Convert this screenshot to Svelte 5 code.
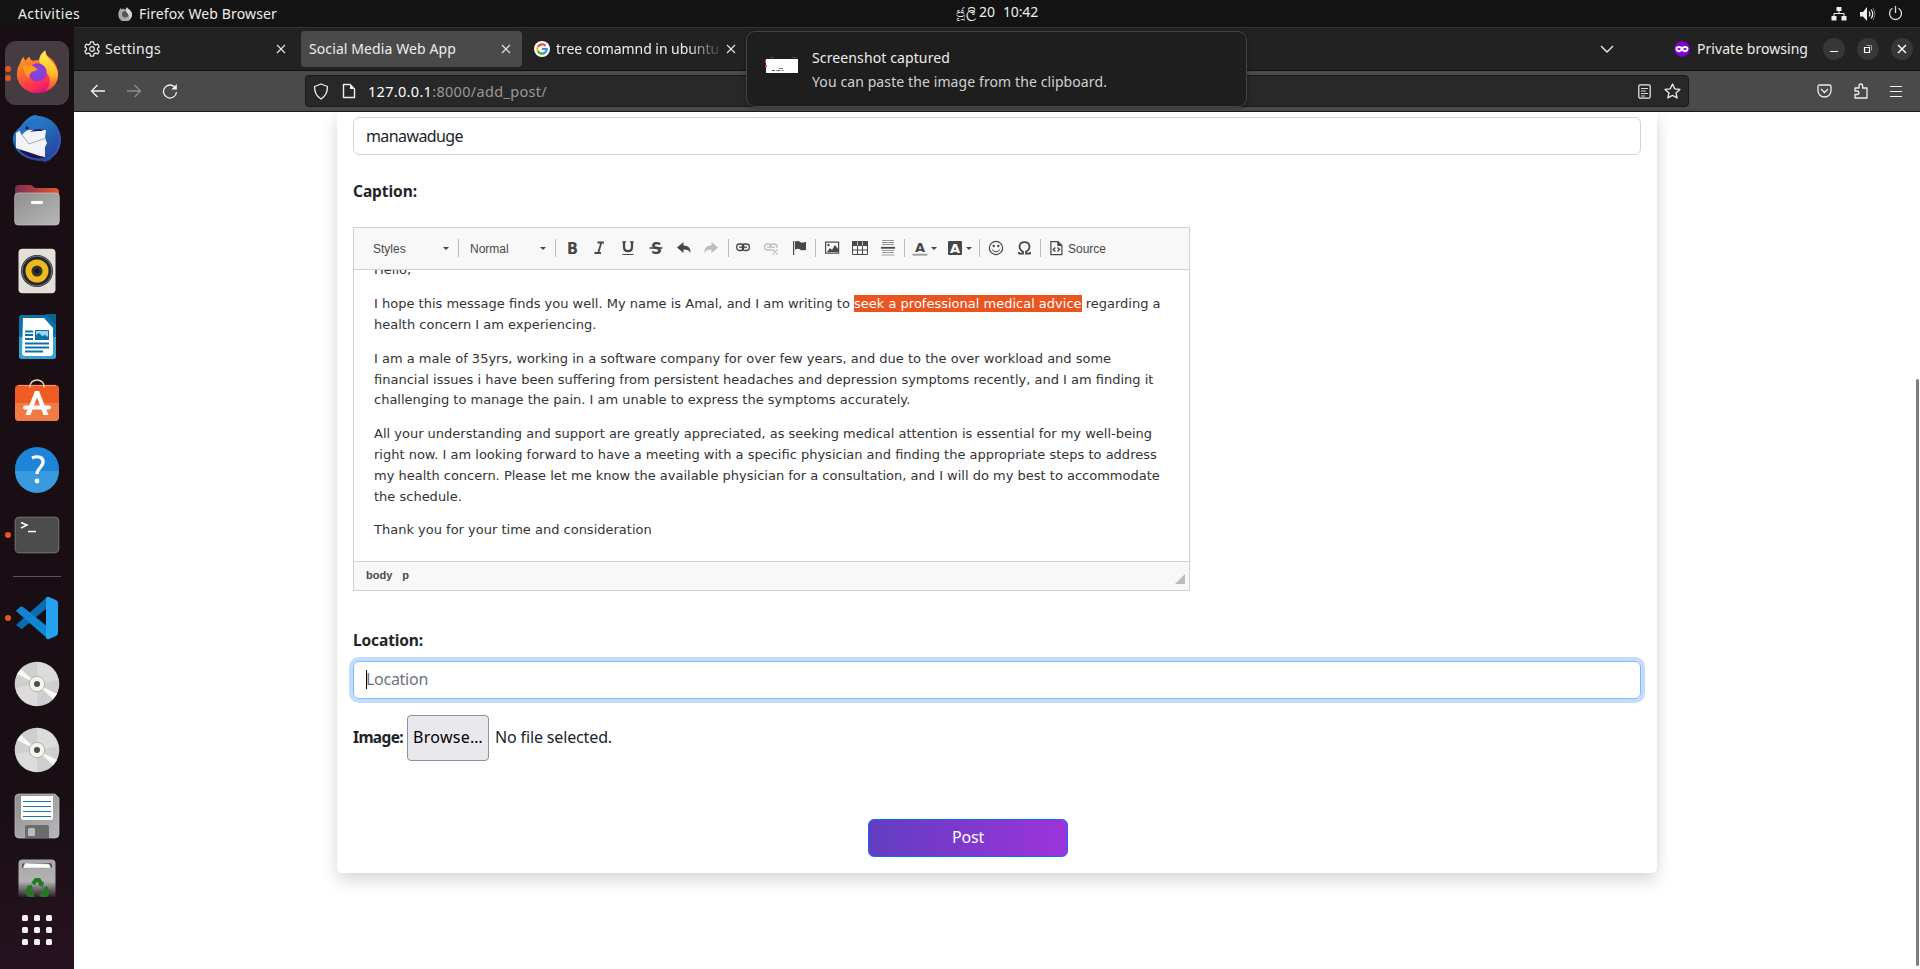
<script>
  // Spreads a text run over the given width with letter-spacing.
  function fit(node, width) {
    const natural = node.getBoundingClientRect().width;
    node.style.letterSpacing = `${(width - natural) / [...node.textContent].length}px`;
  }

  const apps = [
    { id: 'firefox', dots: 2, active: true },
    { id: 'thunderbird', dots: 0 },
    { id: 'files', dots: 0 },
    { id: 'rhythmbox', dots: 0 },
    { id: 'writer', dots: 0 },
    { id: 'software', dots: 0 },
    { id: 'help', dots: 0 },
    { id: 'terminal', dots: 1 },
    { id: 'separator' },
    { id: 'vscode', dots: 1 },
    { id: 'disc', dots: 0 },
    { id: 'disc', dots: 0 },
    { id: 'floppy', dots: 0 },
    { id: 'trash', dots: 0 }
  ];

  const tools = [
    ['Styles', 19], ['arrow', 0], ['sep', 8],
    ['Normal', 11], ['arrow', 0], ['sep', 8],
    ['bold', 8], ['italic', 11], ['underline', 13], ['strike', 12], ['undo', 12], ['redo', 11], ['sep', 9],
    ['link', 6], ['unlink', 12], ['flag', 12], ['sep', 8],
    ['image', 8], ['table', 12], ['rule', 12], ['sep', 8],
    ['color', 7], ['arrow', 2], ['bgcolor', 9], ['arrow', 2], ['sep', 6],
    ['smiley', 8], ['omega', 12], ['sep', 8],
    ['source', 7]
  ];
</script>

{#snippet closeX()}
  <svg class="x" width="10" height="10" viewBox="0 0 10 10"><path d="M1 1l8 8M9 1l-8 8" fill="none" stroke="#e8e8e8" stroke-width="1.1" /></svg>
{/snippet}

{#snippet dockIcon(id)}
  <svg width="48" height="48" viewBox="0 0 48 48">
    {#if id === 'firefox'}
      <path d="M6 14c1-3 2-5 4-7 0 2 1 3 2 4 1-2 2-3 4-4 0 2 1 3 3 4 3 0 5-1 7-1 0-5 3-8 6-10 0 4 2 6 5 8 4 3 8 9 8 17 0 11-9 19-21 19S3 35 3 25c0-4 1-8 3-11z" fill="url(#ffA)" />
      <path d="M26 12c-1-5 3-9 6-11 0 4 2 6 5 9 4 4 8 9 8 15 0 9-6 15-13 17 4-4 5-9 4-14-2-6-7-6-10-16z" fill="url(#ffB)" />
      <circle cx="24" cy="23" r="9.5" fill="url(#ffC)" />
      <path d="M9 16c4-1 8-1 12 1 1 2 3 2 4 2-2 2-4 3-6 3-3 2-4 4-3 7-4-2-6-7-7-13z" fill="#ff9a1c" />
    {:else if id === 'thunderbird'}
      <path d="M8 11C12 5 17 1 22 0l4 1C38 2 47 11 48 23c0 8-3 15-8 19l-3 3-5 2-3-1C14 46 0 37 0 24c0-6 3-8 8-13z" fill="url(#tbA)" />
      <path d="M32 6c8 2 14 9 14 18 0 8-5 17-12 20l-3 3 12-8c4-6 6-12 4-20-3-7-8-11-15-13z" fill="#3a56b8" />
      <path d="M6 35c5 5 15 10 25 8l-2-6z" fill="#22104f" />
      <path d="M3 18l3-2 11-1h16l-1 8 2 5-2 4v10l-5-1-24-8z" fill="#f2f3f6" />
      <path d="M7 17l9 12 17-6" fill="none" stroke="#aaa" />
      <path d="M7 17c1-7 8-14 16-13 7 1 9 6 8 10-7-4-15-2-22 6z" fill="#2672c4" />
      <path d="M17 17c4-3 9-4 14-2l-3 1c-4 0-7 0-11 1z" fill="#22206f" />
      <circle cx="14" cy="13" r="1.4" fill="#181330" />
    {:else if id === 'files'}
      <path d="M2 8q0-4 4-4h12l4 3h20q4 0 4 4v10H2z" fill="url(#fold)" />
      <rect x="1.7" y="12" width="44.600" height="32" rx="3.500" fill="url(#gray)" stroke="#c5c5c5" stroke-width=".7" />
      <rect x="18" y="20" width="12" height="3" rx="1" fill="#fff" />
    {:else if id === 'rhythmbox'}
      <rect x="5.500" y="1.700" width="37" height="44.600" rx="4" fill="#e4e0d8" />
      <circle cx="24" cy="24" r="16" fill="#25262f" /><circle cx="24" cy="24" r="15" fill="none" stroke="#777a89" stroke-width="1" />
      <circle cx="24" cy="24" r="11.500" fill="#edb91c" /><circle cx="24" cy="24" r="5.500" fill="#333" /><circle cx="24" cy="24" r="2.500" fill="#171717" />
    {:else if id === 'writer'}
      <path d="M9 2h26l8 9v32q0 3-3 3H9q-3 0-3-3V5q0-3 3-3z" fill="#0c73aa" /><path d="M6 24h37v19q0 3-3 3H9q-3 0-3-3z" fill="#35a2d0" />
      <path d="M10 5h21l9 10v25q0 3-3 3H12q-3 0-3-3z" fill="#fff" /><path d="M32 1h11v10z" fill="#0c638d" />
      <path d="M12 18.500h8M12 22h8M12 26h8M12 30.500h24M12 34.500h24M12 38.500h18" stroke="#0b71a5" stroke-width="2" /><rect x="22.500" y="17.500" width="13" height="9" fill="#9bd4f1" stroke="#0b71a5" /><path d="M23 26v-4l3-2 3 3 3-1 3 2v2z" fill="#0b71a5" />
    {:else if id === 'software'}
      <rect x="2" y="6" width="44" height="36" rx="4" fill="#f15b24" /><path d="M2 24h44v14q0 4-4 4H6q-4 0-4-4z" fill="#f17b45" /><path d="M5 6.400h38" stroke="#ff9b6e" />
      <path d="M17 8.500V7a7 6 0 0 1 14 0v1.500" fill="none" stroke="#f2d9a6" stroke-width="1.600" />
      <path d="M22 12h4l9.500 24h-5L24 18.500 17.500 36h-5z" fill="#fff" /><path d="M12 28.500h24" stroke="#fff" stroke-width="4" stroke-linecap="round" />
    {:else if id === 'help'}
      <circle cx="24" cy="24" r="22" fill="#1d84d8" /><path d="M2 26h44a22 22 0 0 1-44 0z" fill="#3a9ae0" />
      <path d="M19 13c7-3 12 0 11 5-1 4-6 6-6 11" fill="none" stroke="#fff" stroke-width="3.200" /><circle cx="24" cy="36" r="2.400" fill="#fff" />
    {:else if id === 'terminal'}
      <rect x="2.200" y="6.200" width="43.600" height="35.600" rx="4" fill="#4c4c4c" stroke="#777" /><path d="M8 11.500l6 2.500-6 3M15 20.500h8" fill="none" stroke="#fff" stroke-width="1.500" />
    {:else if id === 'vscode'}
      <path d="M3 31l31-28v11L9 35q-1 0-2-1z" fill="#0a6cb0" /><path d="M3 17l4-4q1-1 3 0l25 20v12z" fill="#0f87d2" /><path d="M33 4q1-2 3-1l7 3q2 1 2 3v30q0 2-2 3l-7 3q-2 1-3-1z" fill="#25a2ee" />
    {:else if id === 'disc'}
      <circle cx="24" cy="24" r="22.300" fill="#cfcfcf" /><path d="M24 24L24 2A22 22 0 0 1 45 20zM24 24L24 46A22 22 0 0 1 3 28z" fill="#dcdcdc" /><path d="M24 24L4 14l4-5zM24 24l20 10-4 5z" fill="#faf9f6" />
      <circle cx="24" cy="24" r="7.700" fill="#f4f3ef" stroke="#b9b29c" /><circle cx="24" cy="24" r="3" fill="#4c4c4c" />
    {:else if id === 'floppy'}
      <path d="M6 2h36l4 4v36q0 4-4 4H6q-4 0-4-4V6q0-4 4-4z" fill="url(#gray)" stroke="#c6c6c6" stroke-width=".7" /><path d="M8 4h32v22q0 2-2 2H10q-2 0-2-2z" fill="#fff" /><path d="M10 9.500h28M10 14.500h28M10 19.500h28M10 24.500h28" stroke="#1777aa" stroke-width="1.100" />
      <path d="M12 46V35q0-2 2-2h20q2 0 2 2v11z" fill="#6c6c6c" /><rect x="15" y="36" width="7" height="8" rx="1.500" fill="#bdbdbd" />
    {:else if id === 'trash'}
      <rect x="5.500" y="1.500" width="37" height="44" rx="4" fill="url(#bin)" /><path d="M9 10V7q0-2 3-2h24q3 0 3 2v3" fill="#555" /><path d="M10 10l2-5 24 1 2 4z" fill="#fff" stroke="#999" stroke-width=".5" />
      <g fill="none" stroke="#1f7a22" stroke-width="4"><path d="M20 26l3-4h3l2 4M32 29l3 5-2 3h-4M21 37h-5l-2-3 3-5" /></g><path d="M31 23l-1 6-5-2zM26 37l4-4v8zM13 28l6-1 1 5z" fill="#1f7a22" />
    {/if}
  </svg>
{/snippet}

{#snippet tool(id)}
  <svg width="16" height="18" viewBox="0 0 16 18" fill="#474747">
    {#if id === 'bold'}<text x="3" y="14.500" textLength="11" lengthAdjust="spacingAndGlyphs" class="glyph">B</text>
    {:else if id === 'italic'}<path d="M6.500 3.500h6.500M3.500 14h6.500M10.500 3L7 14.500" fill="none" stroke="#474747" stroke-width="1.800" />
    {:else if id === 'underline'}<path d="M4 2.500V8q0 4.200 4 4.200T12 8V2.500" fill="none" stroke="#474747" stroke-width="2.300" /><path d="M2.500 2.900h3.500M10 2.900h3.500M2.500 15.500h11" stroke="#474747" stroke-width="1.200" />
    {:else if id === 'strike'}<text x="3" y="14.500" textLength="11" lengthAdjust="spacingAndGlyphs" class="glyph">S</text><path d="M1.500 9h13" stroke="#474747" stroke-width="1.500" />
    {:else if id === 'undo'}<path d="M1 8.500L7.500 3v3.500c5 0 7.500 3 7 7.500-1-2.500-3-3.500-7-3.500V14z" />
    {:else if id === 'redo'}<path d="M15 8.500L8.500 3v3.500c-5 0-7.500 3-7 7.500 1-2.500 3-3.500 7-3.500V14z" fill="#bdbdbd" />
    {:else if id === 'link'}<g fill="none" stroke="#474747" stroke-width="1.300"><rect x="1.700" y="5" width="7" height="6.500" rx="2.800" /><rect x="7.300" y="5" width="7" height="6.500" rx="2.800" /><path d="M4 8.200h8" /></g>
    {:else if id === 'unlink'}<g fill="none" stroke="#bdbdbd" stroke-width="1.300"><path d="M9 11H4q-2.500-.5-2.500-3T4 5h2q2 0 2.500 2M7 8q.5-3 3-3h1.500q3 .5 2.500 4M4 8.200h8M9.500 10.500l5 5M14.500 10.500l-5 5" /></g>
    {:else if id === 'flag'}<path d="M2 2h1.200v14H2zM4 2.500c2-1 4-.5 5 .5s3 .8 6-.3v8c-3 1-5 .8-6-.2s-3-.8-5 .3z" />
    {:else if id === 'image'}<rect x="1.600" y="3.100" width="13" height="11" fill="none" stroke="#474747" stroke-width="1.200" /><path d="M3 13l3-4 2 2 3-5 3 4v3z" /><circle cx="4.500" cy="6" r="1.200" />
    {:else if id === 'table'}<path d="M.5 2.500h15v13H.5zM.5 11h15M5.500 7v8.500M10.500 7v8.500" fill="none" stroke="#474747" /><path d="M0 2h16v5H0z" /><path d="M5.500 2.500v4M10.500 2.500v4" stroke="#f8f8f8" stroke-width=".7" />
    {:else if id === 'rule'}<path d="M2 1.500h12M2 3.500h12M2 5.500h12M2 11.500h12M2 13.500h12M2 16h12" stroke="#999" /><path d="M1 8.800h14" stroke="#474747" stroke-width="1.800" />
    {:else if id === 'color'}<text x="3" y="12.500" class="glyph small">A</text><path d="M.5 15.700h15" stroke="#999" stroke-width="1.800" />
    {:else if id === 'bgcolor'}<rect x="1" y="2" width="14" height="14" rx="1" /><text x="3" y="13.500" class="glyph small light">A</text>
    {:else if id === 'smiley'}<circle cx="8" cy="9" r="6.600" fill="none" stroke="#474747" stroke-width="1.200" /><circle cx="5.700" cy="7" r="1.200" /><circle cx="10.300" cy="7" r="1.200" /><path d="M4 10.500q4 4.500 8 0" fill="none" stroke="#474747" />
    {:else if id === 'omega'}<path d="M2.500 14.700H7v-2C1.500 9.500 3 3.200 8.500 3.200S15.500 9.500 10 12.700v2h4.500M3 15v-2M14 15v-2" fill="none" stroke="#474747" stroke-width="1.800" />
    {:else if id === 'source'}<path d="M2.900 2.600h7l4 4v9h-11z" fill="none" stroke="#474747" stroke-width="1.200" /><path d="M9.300 2v5h5z" /><path d="M7.300 8.500l-2 2 2 2M9.500 8.500l2 2-2 2" fill="none" stroke="#474747" stroke-width="1.400" />
    {/if}
  </svg>
{/snippet}

<svg class="defs" width="0" height="0">
  <defs>
    <linearGradient id="ffA" x1=".1" y1="0" x2=".6" y2="1"><stop offset=".05" stop-color="#ffb020" /><stop offset=".45" stop-color="#ff6b2d" /><stop offset=".8" stop-color="#ff304f" /><stop offset="1" stop-color="#e0107c" /></linearGradient>
    <linearGradient id="ffB" x1=".4" y1="0" x2=".4" y2="1"><stop offset="0" stop-color="#fff44f" /><stop offset=".6" stop-color="#ffb526" /><stop offset="1" stop-color="#ff6a2a" stop-opacity=".5" /></linearGradient>
    <radialGradient id="ffC"><stop offset="0" stop-color="#6a50e8" /><stop offset="1" stop-color="#9a35cc" /></radialGradient>
    <linearGradient id="tbA" x1=".2" y1="0" x2=".8" y2="1"><stop offset="0" stop-color="#2a8ad8" /><stop offset=".5" stop-color="#2467b5" /><stop offset="1" stop-color="#293e98" /></linearGradient>
    <linearGradient id="fold" x1="0" x2="1"><stop offset="0" stop-color="#7b2c55" /><stop offset="1" stop-color="#e9542a" /></linearGradient>
    <linearGradient id="gray" x1="0" y1="0" x2="1" y2="1"><stop offset="0" stop-color="#8e8e8e" /><stop offset="1" stop-color="#b8b8b8" /></linearGradient>
    <linearGradient id="bin" x1="0" y1="0" x2="0" y2="1"><stop offset="0" stop-color="#a8a8a8" /><stop offset=".5" stop-color="#b2b2b2" /><stop offset=".85" stop-color="#2b2026" /></linearGradient>
  </defs>
</svg>

<div class="desktop">
  <header class="panel">
    <span class="activities" use:fit={62}>Activities</span>
    <svg class="ffmini" width="14" height="14" viewBox="0 0 14 14"><path d="M1 4l1.500-3 1 1.500L5 1.500l2 1.300L9 0c0 2 5 3 5 7.500A6.800 6.800 0 0 1 .3 8C.2 6.500.5 5 1 4z" fill="#aaa" /><circle cx="7.200" cy="7.200" r="3.200" fill="#555" /><path d="M9 0c0 2 5 3 5 7.500 0 2-1 4-3 5 2-4-1-5-3-8z" fill="#d8d8d8" /></svg>
    <span class="appname" use:fit={138}>Firefox Web Browser</span>
    <div class="clock"><span class="month" use:fit={21}>ජූලි</span><span class="day" use:fit={16}>20</span><span use:fit={35}>10:42</span></div>
    <div class="status">
      <svg width="16" height="14" viewBox="0 0 16 14" fill="#eee"><path d="M5.500 0h5v4h-5zM0.500 9h5v4.500h-5zM10.500 9h5v4.500h-5z" /><path d="M8 4v2.500M3 9.500v-3h10v3" fill="none" stroke="#eee" /></svg>
      <svg width="16" height="14" viewBox="0 0 16 14" fill="#eee"><path d="M0 5h3l4-5v14L3 9.500H0z" /><path d="M9 4.500q2 2.500 0 5M11 2.500q3.500 4.500 0 9" fill="none" stroke="#eee" stroke-width="1.200" /><path d="M12.800 1q4 6 0 12" fill="none" stroke="#777" /></svg>
      <svg width="15" height="15" viewBox="0 0 15 15"><path d="M4.500 2.300a6 6 0 1 0 6 0M7.500 0v7" fill="none" stroke="#ddd" stroke-width="1.300" /></svg>
    </div>
  </header>

  <div class="below">
    <nav class="dock">
      {#each apps as app}
        {#if app.id === 'separator'}
          <div class="divider"></div>
        {:else}
          <div class="cell" class:active={app.active} class:bin={app.id === 'trash'}>
            {#if app.dots}<div class="dots">{#each Array(app.dots) as _}<i></i>{/each}</div>{/if}
            {@render dockIcon(app.id)}
          </div>
        {/if}
      {/each}
      <div class="grid">{#each Array(9) as _}<i></i>{/each}</div>
    </nav>

    <div class="browser">
      <div class="tabs">
        <div class="tab first">
          <svg width="16" height="16" viewBox="0 0 16 16" fill="none" stroke="#eee" stroke-width="1.200" stroke-linejoin="round"><path d="M6.500.8h3l.5 2.300 1.500.8 2.200-.8 1.500 2.600L13.500 7.300v1.400l1.700 1.600-1.500 2.600-2.200-.8-1.500.8-.5 2.300h-3L6 12.900l-1.500-.8-2.200.8-1.500-2.600 1.700-1.600V7.300L.8 5.700l1.500-2.600 2.200.8L6 3.100z" /><circle cx="8" cy="8" r="2.300" /></svg>
          <span use:fit={56}>Settings</span>{@render closeX()}
        </div>
        <div class="tab selected"><span use:fit={147}>Social Media Web App</span>{@render closeX()}</div>
        <div class="tab third">
          <svg width="16" height="16" viewBox="0 0 16 16"><circle cx="8" cy="8" r="8" fill="#fff" /><g fill="none" stroke-width="2.200"><path d="M3.900 5.700A4.700 4.700 0 0 1 11.500 4.800" stroke="#ea4335" /><path d="M3.900 10.300a4.700 4.700 0 0 1 0-4.600" stroke="#fbbc05" /><path d="M11.200 11.400A4.700 4.700 0 0 1 3.900 10.300" stroke="#34a853" /><path d="M8 8h4.700q0 2.200-1.500 3.400" stroke="#4285f4" /></g></svg>
          <span class="fade" use:fit={163}>tree comamnd in ubuntu</span>{@render closeX()}
        </div>
        <div class="tabend">
          <svg class="chev" width="14" height="8" viewBox="0 0 14 8"><path d="M1 1l6 6 6-6" fill="none" stroke="#eee" stroke-width="1.400" /></svg>
          <svg class="mask" width="16" height="16" viewBox="0 0 16 16"><circle cx="8" cy="8" r="7.800" fill="#8000d7" /><path d="M1.500 7.500C2 4.500 6 4.500 8 6c2-1.500 6-1.500 6.500 1.500 0 4-4.500 5-6.500 2-2 3-6.500 2-6.500-2z" fill="#fff" /><ellipse cx="5" cy="8" rx="1.700" ry="1.100" fill="#8000d7" /><ellipse cx="11" cy="8" rx="1.700" ry="1.100" fill="#8000d7" /></svg>
          <span class="private" use:fit={111}>Private browsing</span>
          <div class="win"><svg width="10" height="10" viewBox="0 0 10 10"><path d="M1 7.500h8" stroke="#fff" /></svg></div>
          <div class="win"><svg width="10" height="10" viewBox="0 0 10 10" fill="none"><path d="M1.500 3.500h5v5h-5z" stroke="#fff" stroke-width="1.200" /><path d="M3.500 1.500h5v5" stroke="#999" /></svg></div>
          <div class="win"><svg width="10" height="10" viewBox="0 0 10 10"><path d="M1 1l8 8M9 1l-8 8" stroke="#fff" stroke-width="1.400" /></svg></div>
        </div>
      </div>

      <div class="toolbar">
        <svg class="back" width="16" height="16" viewBox="0 0 16 16" fill="none" stroke="#f2f2f2" stroke-width="1.300"><path d="M15 8H2M7.500 2L1.500 8l6 6" /></svg>
        <svg class="fwd" width="16" height="16" viewBox="0 0 16 16" fill="none" stroke="#8c8c8c" stroke-width="1.300"><path d="M1 8h13M8.500 2l6 6-6 6" /></svg>
        <svg class="reload" width="16" height="16" viewBox="0 0 16 16"><path d="M13.500 5A6.500 6.500 0 1 0 14.500 9" fill="none" stroke="#f2f2f2" stroke-width="1.300" /><path d="M14.800 1v5.500H9.300z" fill="#f2f2f2" /></svg>
        <div class="url">
          <svg width="16" height="17" viewBox="0 0 16 17"><path d="M8 1l6.500 2.500C14.500 9 13 13 8 16 3 13 1.500 9 1.500 3.500z" fill="none" stroke="#eee" stroke-width="1.300" stroke-linejoin="round" /></svg>
          <svg class="page" width="14" height="16" viewBox="0 0 14 16"><path d="M1.500 1.500h6.500l4.500 4.500v8.500h-11z" fill="none" stroke="#eee" stroke-width="1.400" stroke-linejoin="round" /><path d="M8 1v5h5z" fill="#eee" /></svg>
          <span class="address" use:fit={179}><b>127.0.0.1</b>:8000/add_post/</span>
          <svg class="reader" width="13" height="15" viewBox="0 0 13 15" fill="none" stroke="#eee"><rect x=".8" y=".8" width="11.400" height="13.400" rx="1.500" stroke-width="1.200" /><path d="M3 4.500h7M3 7h5M3 9.500h7M3 12h4" stroke-width=".9" /></svg>
          <svg width="17" height="16" viewBox="0 0 17 16"><path d="M8.500 1l2.200 4.800 5.200.6-3.900 3.500 1.100 5.100-4.600-2.600L3.900 15 5 9.900 1.100 6.400l5.200-.6z" fill="none" stroke="#eee" stroke-width="1.300" stroke-linejoin="round" /></svg>
        </div>
        <div class="right">
          <svg width="15" height="14" viewBox="0 0 15 14" fill="none" stroke="#eee" stroke-width="1.300"><path d="M2.500 1h10q1.500 0 1.500 1.500v4C14 10.500 11 13 7.500 13S1 10.500 1 6.500v-4Q1 1 2.500 1z" /><path d="M4 5l3.500 3.500L11 5" /></svg>
          <svg width="14" height="16" viewBox="0 0 14 16" fill="none" stroke="#eee" stroke-width="1.300" stroke-linejoin="round"><path d="M1 5h4V3q0-2 1.800-2t1.800 2v2H13v10H1v-3.500h2q2 0 2-1.700T3 8H1z" /></svg>
          <svg width="12" height="11" viewBox="0 0 12 11"><path d="M0 .5h12M0 5.500h12M0 10.500h12" stroke="#f2f2f2" /></svg>
        </div>
      </div>

      <main class="viewport">
        <div class="card">
          <div class="field"><span use:fit={97}>manawaduge</span></div>
          <div class="label caption"><span use:fit={64}>Caption:</span></div>
          <div class="editor">
            <div class="cktools">
              {#each tools as [id, gap]}
                <div class="tool {id}" style:margin-left="{gap}px">
                  {#if id === 'Styles' || id === 'Normal'}<span>{id}</span>
                  {:else if id === 'arrow' || id === 'sep'}<i></i>
                  {:else}{@render tool(id)}{/if}
                </div>
              {/each}
              <span class="srctext">Source</span>
            </div>
            <div class="ckbody">
              <p>Hello,</p>
              <p>I hope this message finds you well. My name is Amal, and I am writing to <mark>seek a professional medical advice</mark> regarding a<br />health concern I am experiencing.</p>
              <p>I am a male of 35yrs, working in a software company for over few years, and due to the over workload and some<br />financial issues i have been suffering from persistent headaches and depression symptoms recently, and I am finding it<br />challenging to manage the pain. I am unable to express the symptoms accurately.</p>
              <p>All your understanding and support are greatly appreciated, as seeking medical attention is essential for my well-being<br />right now. I am looking forward to have a meeting with a specific physician and finding the appropriate steps to address<br />my health concern. Please let me know the available physician for a consultation, and I will do my best to accommodate<br />the schedule.</p>
              <p>Thank you for your time and consideration</p>
            </div>
            <div class="ckfoot"><b>body</b><b>p</b><i></i></div>
          </div>
          <div class="label location"><span use:fit={70}>Location:</span></div>
          <div class="field focus"><i class="caret"></i><span use:fit={62}>Location</span></div>
          <div class="file">
            <strong use:fit={50}>Image:</strong>
            <div class="browse"><span use:fit={70}>Browse…</span></div>
            <span class="none" use:fit={117}>No file selected.</span>
          </div>
          <button class="post"><span use:fit={32}>Post</span></button>
        </div>
        <div class="scroll"></div>
      </main>
    </div>
  </div>

  <aside class="notice">
    <svg width="33" height="16" viewBox="0 0 33 16"><path d="M1 2h32v14H1z" fill="#fff" /><path d="M0 3h1v3H0zM0 8h2v2H0z" fill="#e9542a" /><path d="M5 0h4v1H5zM27 0h5v1h-5z" fill="#444" /><path d="M14 11h4v1h-4z" fill="#e04a2a" /><path d="M7 13h3v1H7zM13 13h2v1h-2z" fill="#555" /><path d="M11 13h2v1h-2zM16 13h3v1h-3z" fill="#7ba7c9" /></svg>
    <div><span use:fit={138}>Screenshot captured</span><span class="sub" use:fit={295}>You can paste the image from the clipboard.</span></div>
  </aside>
</div>

<style>
  :global(body) { overflow: hidden; background: #fff; }
  .desktop { position: relative; width: 1920px; height: 969px; display: flex; flex-direction: column; overflow: hidden; font-family: "Noto Sans", sans-serif; color: #eee; white-space: nowrap; }
  .desktop :global(*) { box-sizing: border-box; }
  .defs { position: absolute; }
  svg { display: block; flex: none; }
  span, strong { display: inline-block; flex: none; }
  .panel { height: 27px; flex: none; background: #131313; display: flex; align-items: center; padding-left: 18px; font-size: 14px; line-height: 20px; position: relative; }
  .activities { margin-right: 38px; }
  .ffmini { margin-right: 7px; }
  .clock { display: flex; margin-left: 679px; padding-bottom: 3px; }
  .month { margin-right: 3px; font-size: 13px; }
  .day { margin-right: 8px; }
  .status { margin-left: auto; display: flex; align-items: center; gap: 12px; padding-right: 17px; }
  .status svg:nth-child(2) { margin-left: 1px; }
  .below { flex: 1; display: flex; min-height: 0; }
  .dock { width: 74px; flex: none; padding-top: 13px; background: linear-gradient(165deg, #190e14 0 80%, #26121f); }
  .cell { height: 66px; display: flex; align-items: center; justify-content: center; position: relative; }
  .cell.active { padding: 1px 5px; }
  .cell.active::before { content: ''; position: absolute; left: 5px; top: 1px; width: 64px; height: 64px; border-radius: 11px; background: #453c42; }
  .cell > svg { position: relative; }
  .cell.active > svg { width: 47px; height: 47px; }
  .cell.bin { height: 48px; overflow: hidden; align-items: flex-start; padding-top: 9px; }
  .dots { position: absolute; left: 5px; top: 0; bottom: 0; display: flex; flex-direction: column; justify-content: center; gap: 3px; z-index: 1; }
  .dots i { width: 6px; height: 6px; border-radius: 50%; background: #e95420; }
  .divider { height: 1px; margin: 8px 13px; background: #5d555a; }
  .grid { display: grid; grid-template-columns: repeat(3, 6px); gap: 6px; margin: 18px 0 0 22px; }
  .grid i { height: 6px; border-radius: 1.5px; background: #f2f2f2; }
  .browser { flex: 1; display: flex; flex-direction: column; min-width: 0; }
  .tabs { height: 44px; flex: none; background: #222; border-top: 1px solid #333; border-bottom: 1px solid #111; display: flex; padding-top: 3px; font-size: 14px; line-height: 20px; }
  .tab { height: 36px; display: flex; align-items: center; }
  .tab .x { margin-left: auto; }
  .first { width: 222px; padding: 0 10px; margin-right: 5px; gap: 5px; }
  .selected { width: 221px; padding: 0 11px 0 8px; background: #4a4a4a; border-radius: 4px; }
  .third { width: 224px; padding: 0 10px 0 12px; gap: 6px; }
  .fade { -webkit-mask-image: linear-gradient(90deg, #000 80%, transparent 103%); mask-image: linear-gradient(90deg, #000 80%, transparent 103%); }
  .tabend { margin-left: auto; display: flex; align-items: center; height: 36px; padding-right: 7px; }
  .chev { margin-right: 60px; }
  .mask { margin-right: 7px; }
  .private { margin-right: 15px; }
  .win { width: 22px; height: 22px; border-radius: 50%; background: #373737; display: flex; align-items: center; justify-content: center; }
  .win + .win { margin-left: 12px; }
  .toolbar { height: 41px; flex: none; background: #4a4a4a; border-bottom: 1px solid #191919; display: flex; align-items: center; padding-left: 16px; }
  .fwd { margin-left: 20px; }
  .reload { margin-left: 20px; }
  .url { width: 1384px; height: 32px; margin-left: 127px; background: #282828; border: 1px solid #181818; border-radius: 4px; display: flex; align-items: center; padding: 0 7px 0 7px; font-size: 14.5px; color: #999; }
  .page { margin-left: 13px; }
  .address { margin-left: 12px; }
  .address b { font-weight: 400; color: #fff; }
  .reader { margin-left: auto; margin-right: 13px; }
  .right { margin-left: auto; display: flex; align-items: center; gap: 22px; padding-right: 18px; }
  .viewport { flex: 1; min-height: 0; position: relative; background: #fff; overflow: hidden; padding-left: 263px; color: #212529; }
  .card { width: 1320px; height: 761px; padding: 5px 16px 0; background: #fff; border-radius: 0 0 5px 5px; box-shadow: 0 -10px 16px rgba(0,0,0,.04), 0 8px 16px rgba(0,0,0,.15); display: flex; flex-direction: column; font-size: 16px; line-height: 24px; }
  .field { height: 38px; flex: none; border: 1px solid #ced4da; border-radius: 6px; padding: 6px 12px; display: flex; }
  .field.focus { border-color: #86b7fe; box-shadow: 0 0 0 4px #c2dbfe; color: #6c757d; position: relative; padding-top: 5px; }
  .caret { position: absolute; left: 12px; top: 8px; width: 1px; height: 19px; background: #000; }
  .label { font-weight: 700; height: 24px; flex: none; font-size: 15.5px; }
  .caption { margin: 24px 0; }
  .location { margin: 37px 0 9px; }
  .editor { width: 837px; height: 364px; flex: none; border: 1px solid #d1d1d1; display: flex; flex-direction: column; }
  .cktools { height: 42px; flex: none; border-bottom: 1px solid #d1d1d1; background: #f8f8f8; display: flex; align-items: center; padding-bottom: 1px; font: 12px/18px "Liberation Sans", sans-serif; color: #484848; }
  .tool { flex: none; }
  .Styles, .Normal { width: 69px; padding-top: 1px; }
  .arrow { width: 8px; }
  .arrow i { display: block; margin: 0 1px; border: 3px solid transparent; border-top-color: #474747; border-bottom: 0; }
  .sep i { display: block; width: 1px; height: 18px; background: #bcbcbc; }
  .glyph { font: bold 16px "DejaVu Sans", sans-serif; }
  .glyph.small { font: bold 13px "DejaVu Sans", sans-serif; }
  .glyph.light { fill: #fff; }
  .srctext { margin-left: 4px; padding-top: 1px; }
  .ckbody { flex: 1; min-height: 0; overflow: hidden; padding-left: 20px; font: 13px/20.8px "DejaVu Sans", sans-serif; color: #333; }
  .ckbody p { margin: 0 0 13px; }
  .ckbody p:first-child { margin-top: -9.6px; }
  mark { background: #e95420; color: #fff; padding: 1px 0; }
  .ckfoot { height: 29px; flex: none; border-top: 1px solid #d1d1d1; background: #f8f8f8; display: flex; align-items: center; gap: 10px; padding: 0 0 2px 12px; font: 11px/17px "Liberation Sans", sans-serif; color: #484848; }
  .ckfoot i { margin: 8px 4px 0 auto; border: 5px solid transparent; border-right-color: #bcbcbc; border-bottom-color: #bcbcbc; }
  .file { display: flex; align-items: center; margin-top: 16px; height: 46px; flex: none; }
  .file strong { font-size: 15.5px; padding-bottom: 2px; }
  .none { padding-bottom: 2px; }
  .browse { width: 82px; height: 46px; margin: 0 6px 0 4px; padding-bottom: 2px; border: 1px solid #8f8f9d; border-radius: 4px; background: #e9e9ed; color: #000; display: flex; align-items: center; justify-content: center; }
  .post { width: 200px; height: 38px; flex: none; margin: 58px 0 0 515px; padding: 0 0 2px; border: 1px solid #0d6efd; border-radius: 6px; background: linear-gradient(90deg, #613dc1, #9d34da); color: #fff; font: 16px/24px "Noto Sans", sans-serif; }
  .scroll { position: absolute; right: 1px; top: 267px; width: 3px; height: 587px; border-radius: 2px; background: #7d7d7d; }
  .notice { position: absolute; left: 746px; top: 31px; width: 501px; height: 76px; background: #1e1e1e; border: 1px solid #444; border-radius: 9px; box-shadow: 0 1px 5px rgba(0,0,0,.3); display: flex; padding: 14px 0 0 18px; font-size: 14px; line-height: 24px; }
  .notice svg { margin: 11px 14px 0 0; }
  .notice div { display: flex; flex-direction: column; align-items: flex-start; }
  .sub { color: #d2d2d2; }
</style>
